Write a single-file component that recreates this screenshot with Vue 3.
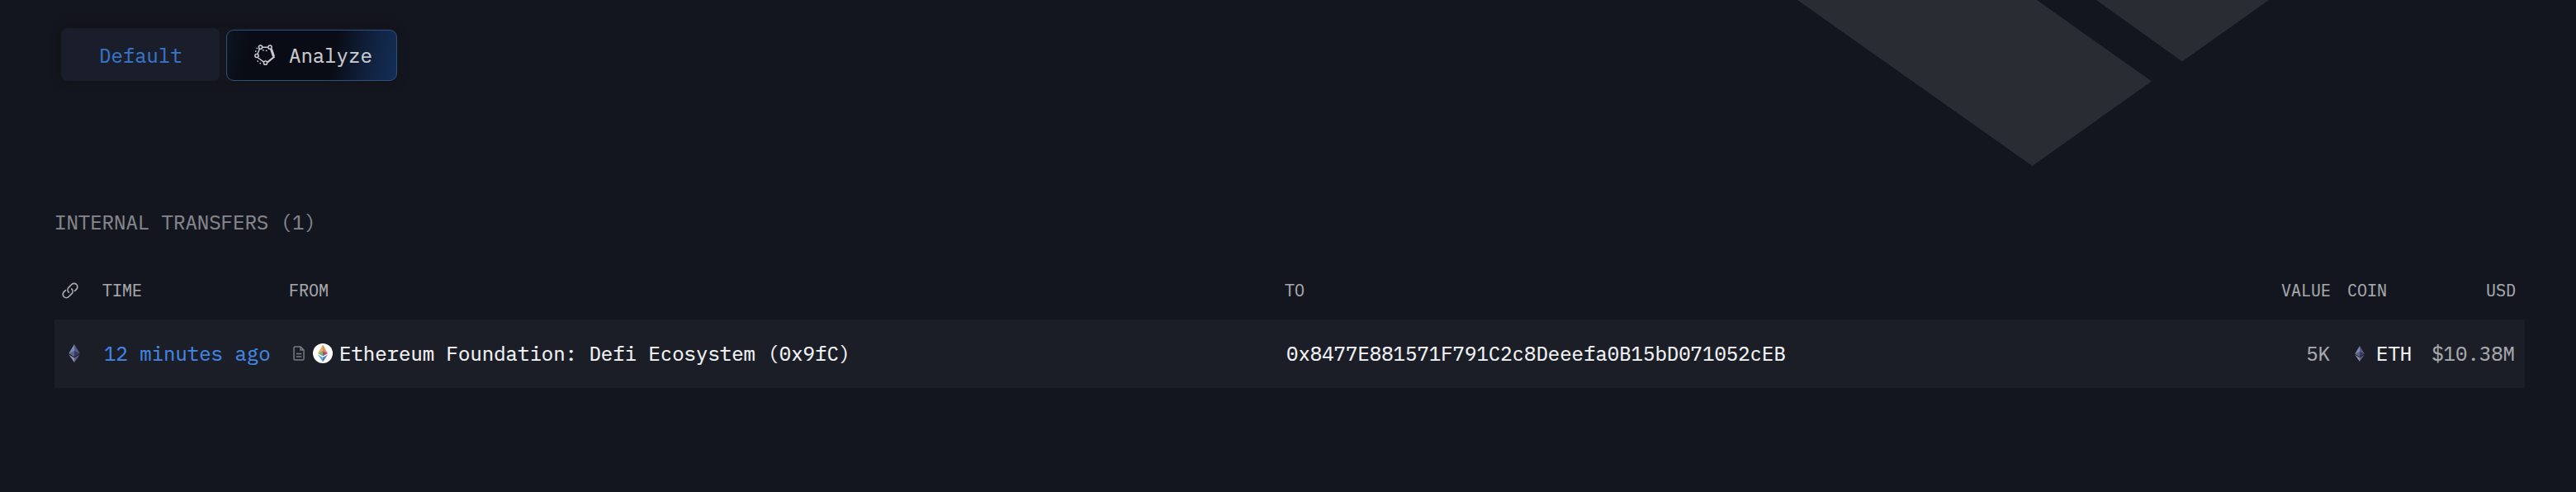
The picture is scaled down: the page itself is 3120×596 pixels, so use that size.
<script setup>
    import { ref } from 'vue'

    const activeView = ref('default')

    const transfers = ref([
        {
            id: 1,
            time: '12 minutes ago',
            from: 'Ethereum Foundation: Defi Ecosystem (0x9fC)',
            to: '0x8477E881571F791C2c8Deeefa0B15bD071052cEB',
            value: '5K',
            coin: 'ETH',
            usd: '$10.38M',
        },
    ])
</script>

<template>
    <div class="page">
        <svg class="backdrop" viewBox="0 0 580 204" aria-hidden="true">
            <path d="M7 0H297L436 98.500L291.500 201ZM369 0H578L473 74.500Z" fill="#2a2c34" />
        </svg>

        <div class="switcher">
            <button class="view plain" @click="activeView = 'default'">Default</button>
            <button class="view analyze" @click="activeView = 'analyze'">
                <svg class="analyze-icon" viewBox="0 0 26 26" fill="none" stroke="#cbccd0">
                    <path d="M9.800 3.200H16.500M6.500 5L4 11.200M4.500 16L11.500 21.200" stroke-width="1.500" />
                    <path d="M20.500 5.500L23.500 14.500" stroke-width="3" />
                    <path d="M24.500 14.500L16 21.300" stroke-width="2.200" />
                    <path d="M1.500 9L3.500 3.800M10 6.700L13.500 7.800L17 6.700M3.500 19.500L8 23.200" stroke-width="1.300" stroke-dasharray="1.800 2.200" />
                    <g stroke-width="1.500">
                        <circle cx="7.500" cy="3.200" r="2.100" />
                        <circle cx="19" cy="3.200" r="2.100" />
                        <circle cx="3" cy="13.500" r="2.100" />
                        <circle cx="13.500" cy="22.200" r="2.100" />
                    </g>
                </svg>
                <span>Analyze</span>
            </button>
        </div>

        <h2 class="title">INTERNAL TRANSFERS ({{ transfers.length }})</h2>

        <div class="table">
            <div class="row head">
                <div class="chain">
                    <svg class="link-icon" viewBox="0 0 20 20" fill="none" stroke="#a8a9ad" stroke-width="1.700" stroke-linecap="round">
                        <path d="M8.300 12.200A4.200 4.200 0 0 1 8 6.300L11.800 2.500A4.100 4.100 0 0 1 17.600 8.300L15.600 10.300" />
                        <path d="M11.700 7.800A4.200 4.200 0 0 1 12 13.700L8.200 17.500A4.100 4.100 0 0 1 2.400 11.700L4.400 9.700" />
                    </svg>
                </div>
                <div>TIME</div>
                <div>FROM</div>
                <div>TO</div>
                <div class="right">VALUE</div>
                <div class="coin-head">COIN</div>
                <div class="right">USD</div>
            </div>

            <div v-for="item in transfers" :key="item.id" class="row body">
                <div class="chain">
                    <svg class="eth" viewBox="0 0 14 22">
                        <path d="M7 0V15L.3 11Z" fill="#7d88b0" />
                        <path d="M7 0V15L13.700 11Z" fill="#555b86" />
                        <path d="M7 8L.3 11L7 15Z" fill="#5a6289" />
                        <path d="M7 8L13.700 11L7 15Z" fill="#363b5e" />
                        <path d="M.3 12.500L7 16.500V22Z" fill="#8791b5" />
                        <path d="M13.700 12.500L7 16.500V22Z" fill="#5a6086" />
                    </svg>
                </div>
                <div class="time">{{ item.time }}</div>
                <div class="from">
                    <svg class="file-icon" viewBox="0 0 14 18" fill="none" stroke="#797b82" stroke-width="1.500">
                        <path d="M9 1H2.300Q1 1 1 2.300V15.700Q1 17 2.300 17H11.700Q13 17 13 15.700V5ZM9 1V5H13M3.800 9.500H10.200M3.800 13H10.200" />
                    </svg>
                    <svg class="foundation" viewBox="0 0 24 24">
                        <circle cx="12" cy="12" r="12" fill="#fff" />
                        <path d="M12 1.500V10L6 12Z" fill="#e9ad5e" />
                        <path d="M12 1.500V10L18 12Z" fill="#d89164" />
                        <path d="M12 9.300L6 12L12 15.500Z" fill="#75b96c" />
                        <path d="M12 9.300L18 12L12 15.500Z" fill="#a54f86" />
                        <path d="M6 13.600L12 17V22.500Z" fill="#65add8" />
                        <path d="M18 13.600L12 17V22.500Z" fill="#5879bb" />
                    </svg>
                    <span>{{ item.from }}</span>
                </div>
                <div class="to">{{ item.to }}</div>
                <div class="right muted">{{ item.value }}</div>
                <div class="coin">
                    <svg class="eth small" viewBox="0 0 14 22">
                        <path d="M7 0V15L.3 11Z" fill="#7d88b0" />
                        <path d="M7 0V15L13.700 11Z" fill="#555b86" />
                        <path d="M7 8L.3 11L7 15Z" fill="#5a6289" />
                        <path d="M7 8L13.700 11L7 15Z" fill="#363b5e" />
                        <path d="M.3 12.500L7 16.500V22Z" fill="#8791b5" />
                        <path d="M13.700 12.500L7 16.500V22Z" fill="#5a6086" />
                    </svg>
                    <span>{{ item.coin }}</span>
                </div>
                <div class="right muted">{{ item.usd }}</div>
            </div>
        </div>
    </div>
</template>

<style>
    body {
        margin: 0;
        background: #13161e;
    }
</style>

<style scoped>
    .page {
        position: relative;
        box-sizing: border-box;
        height: 596px;
        padding: 34px 62px 0 66px;
        overflow: hidden;
        background: #13161e;
        color: #f4f5f8;
        font-family: "IBM Plex Mono", "DejaVu Sans Mono", monospace;
        font-size: 24px;
        white-space: nowrap;
        -webkit-text-stroke: 0.2px currentColor;
    }

    .backdrop {
        position: absolute;
        top: 0;
        left: 2170px;
        width: 580px;
        height: 204px;
    }

    .switcher {
        display: flex;
        align-items: flex-end;
        gap: 8px;
        width: 407px;
        height: 64px;
        margin-left: 8px;
        border-radius: 8px;
        box-shadow: 0 0 10px 2px #14131a;
    }

    .view {
        display: flex;
        align-items: center;
        box-sizing: border-box;
        font: inherit;
        cursor: pointer;
    }

    .plain {
        width: 192px;
        height: 64px;
        padding: 2px 0 0 46px;
        border: none;
        border-radius: 8px;
        background: #191e2a;
        color: #3973c8;
    }

    .analyze {
        gap: 16px;
        width: 207px;
        height: 62px;
        padding: 0 0 0 33px;
        border: 1px solid #304f7e;
        border-radius: 9px;
        background: linear-gradient(100deg, #0d1421 0%, #090c14 14%, #090c14 62%, #10213e 82%, #132e57 100%);
        color: #cbccd0;
    }

    .analyze-icon {
        width: 26px;
        height: 26px;
    }

    .title {
        height: 32px;
        margin: 155px 0 0;
        line-height: 32px;
        color: #85868b;
        font-size: 24px;
        font-weight: 400;
    }

    .table {
        margin-top: 33px;
    }

    .row {
        display: grid;
        grid-template-columns: 58px 226px 1206px 1fr 170px 100px 124px;
        align-items: center;
        box-sizing: border-box;
        padding-right: 11px;
    }

    .head {
        height: 69px;
        padding-bottom: 2px;
        color: #a8a9ad;
        font-size: 20px;
    }

    .body {
        height: 83px;
        padding-bottom: 1px;
        background: #1b1e26;
    }

    .chain,
    .from,
    .coin {
        display: flex;
        align-items: center;
    }

    .link-icon {
        width: 20px;
        height: 20px;
        margin-left: 9px;
    }

    .eth {
        width: 14px;
        height: 22px;
        margin-left: 17px;
    }

    .time {
        padding-left: 2px;
        color: #4385e0;
    }

    .file-icon {
        width: 14px;
        height: 18px;
        margin: 0 10px 0 5px;
    }

    .foundation {
        width: 24px;
        height: 24px;
        margin-right: 8px;
    }

    .to {
        padding-left: 2px;
    }

    .right {
        text-align: right;
    }

    .muted {
        padding-right: 1px;
        color: #a8a9ad;
    }

    .coin-head {
        padding-left: 20px;
    }

    .coin {
        gap: 14px;
    }

    .small {
        width: 12px;
        height: 19px;
        margin-left: 29px;
    }
</style>
